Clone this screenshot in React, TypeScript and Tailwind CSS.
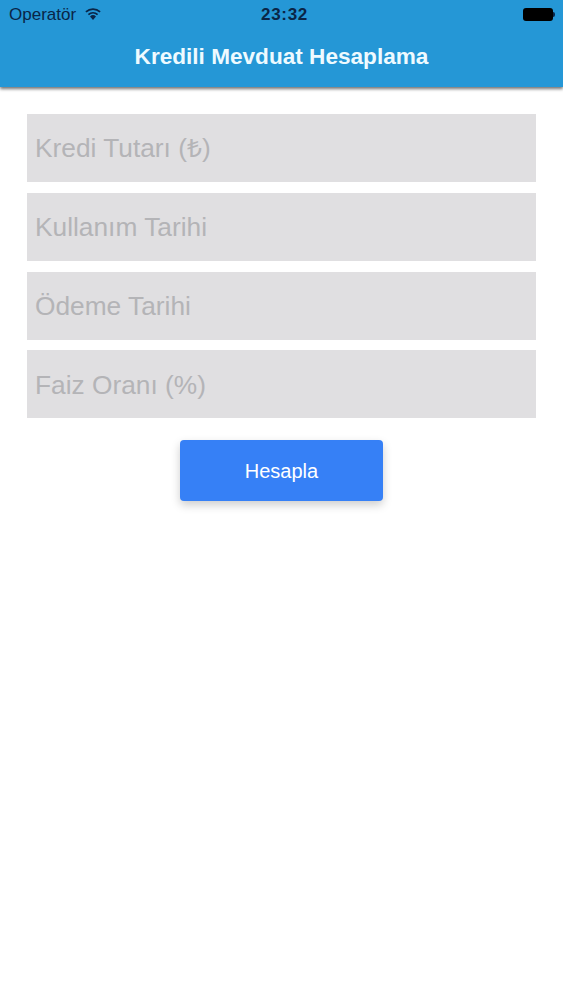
export default function App() {
  const fields = ["Kredi Tutarı (₺)", "Kullanım Tarihi", "Ödeme Tarihi", "Faiz Oranı (%)"];
  return (
    <div className="w-[563px] h-[1000px] bg-white overflow-hidden font-['Liberation_Sans','Noto_Sans',sans-serif]">
      <header className="h-[87px] bg-[#2597d6] shadow-[0_2px_3px_rgba(0,0,0,0.55)] flex flex-col">
        <div className="h-[29px] px-[9px] flex items-center justify-between text-[#0a2547] relative">
          <div className="flex items-center gap-[8px]">
            <span className="text-[17px] leading-none">Operatör</span>
            <svg width="18" height="13" viewBox="0 0 18 13" className="mb-[3px]">
              <path d="M9 13 L6 9.4 A4.6 4.6 0 0 1 12 9.4 Z" fill="#0a2547" />
              <path d="M4.4 7.6 A7 7 0 0 1 13.6 7.6" fill="none" stroke="#0a2547" strokeWidth="1.7" />
              <path d="M1.9 4.9 A10.6 10.6 0 0 1 16.1 4.9" fill="none" stroke="#0a2547" strokeWidth="1.7" />
            </svg>
          </div>
          <span className="absolute left-[261px] top-[5px] text-[17px] leading-[19px] font-bold tracking-[0.7px]">23:32</span>
          <div className="flex items-center mr-[-1px]">
            <div className="w-[30px] h-[13px] rounded-[3px] bg-black" />
            <div className="w-[2px] h-[5px] bg-[#0a2547] rounded-r-sm" />
          </div>
        </div>
        <div className="flex-1 flex items-center justify-center pb-[1px]">
          <h1 className="text-[22.6px] leading-none font-bold text-[#eefaff]">Kredili Mevduat Hesaplama</h1>
        </div>
      </header>
      <main className="pt-[27px] flex flex-col items-center">
        <div className="flex flex-col gap-[10.8px] w-[509px]">
          {fields.map((f) => (
            <div key={f} className="h-[68px] bg-[#e0dfe1] flex items-center px-[8px] pt-[2px] text-[26.3px] text-[#b4b4b7]">
              {f}
            </div>
          ))}
        </div>
        <button className="mt-[21.6px] w-[203px] h-[61px] pt-[1px] bg-[#3680f6] rounded-[4px] text-white text-[20px] shadow-[0_4px_10px_rgba(0,0,0,0.2)]">
          Hesapla
        </button>
      </main>
    </div>
  );
}
